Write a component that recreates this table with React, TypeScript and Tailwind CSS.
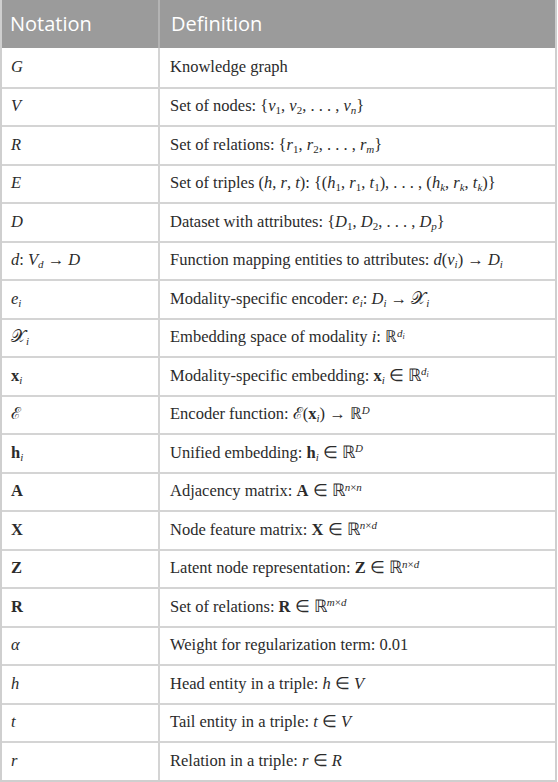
import React from "react";

const I = ({ children }: { children: React.ReactNode }) => <i>{children}</i>;
const B = ({ children }: { children: React.ReactNode }) => <b className="font-bold not-italic">{children}</b>;
// preflight already shifts sub/sup relative to the baseline
const Sub = ({ children }: { children: React.ReactNode }) => <sub className="text-[11px]">{children}</sub>;
const Sup = ({ children }: { children: React.ReactNode }) => <sup className="text-[11px]">{children}</sup>;
const Di = () => (
  <Sup>
    <I>d</I>
    <sub className="text-[8px]">
      <I>i</I>
    </sub>
  </Sup>
);

const rows: [React.ReactNode, React.ReactNode][] = [
  [<I>G</I>, <>Knowledge graph</>],
  [
    <I>V</I>,
    <>
      Set of nodes: {"{"}<I>v</I><Sub>1</Sub>, <I>v</I><Sub>2</Sub>, . . . , <I>v</I><Sub><I>n</I></Sub>{"}"}
    </>,
  ],
  [
    <I>R</I>,
    <>
      Set of relations: {"{"}<I>r</I><Sub>1</Sub>, <I>r</I><Sub>2</Sub>, . . . , <I>r</I><Sub><I>m</I></Sub>{"}"}
    </>,
  ],
  [
    <I>E</I>,
    <>
      Set of triples (<I>h</I>, <I>r</I>, <I>t</I>): {"{"}(<I>h</I><Sub>1</Sub>, <I>r</I><Sub>1</Sub>, <I>t</I><Sub>1</Sub>), . . . , (<I>h</I><Sub><I>k</I></Sub>, <I>r</I><Sub><I>k</I></Sub>, <I>t</I><Sub><I>k</I></Sub>){"}"}
    </>,
  ],
  [
    <I>D</I>,
    <>
      Dataset with attributes: {"{"}<I>D</I><Sub>1</Sub>, <I>D</I><Sub>2</Sub>, . . . , <I>D</I><Sub><I>p</I></Sub>{"}"}
    </>,
  ],
  [
    <>
      <I>d</I>: <I>V</I><Sub><I>d</I></Sub> → <I>D</I>
    </>,
    <>
      Function mapping entities to attributes: <I>d</I>(<I>v</I><Sub><I>i</I></Sub>) → <I>D</I><Sub><I>i</I></Sub>
    </>,
  ],
  [
    <>
      <I>e</I><Sub><I>i</I></Sub>
    </>,
    <>
      Modality-specific encoder: <I>e</I><Sub><I>i</I></Sub>: <I>D</I><Sub><I>i</I></Sub> → 𝒳<Sub><I>i</I></Sub>
    </>,
  ],
  [
    <>
      𝒳<Sub><I>i</I></Sub>
    </>,
    <>
      Embedding space of modality <I>i</I>: ℝ<Di />
    </>,
  ],
  [
    <>
      <B>x</B><Sub><I>i</I></Sub>
    </>,
    <>
      Modality-specific embedding: <B>x</B><Sub><I>i</I></Sub> ∈ ℝ<Di />
    </>,
  ],
  [
    <>ℰ</>,
    <>
      Encoder function: ℰ(<B>x</B><Sub><I>i</I></Sub>) → ℝ<Sup><I>D</I></Sup>
    </>,
  ],
  [
    <>
      <B>h</B><Sub><I>i</I></Sub>
    </>,
    <>
      Unified embedding: <B>h</B><Sub><I>i</I></Sub> ∈ ℝ<Sup><I>D</I></Sup>
    </>,
  ],
  [
    <B>A</B>,
    <>
      Adjacency matrix: <B>A</B> ∈ ℝ<Sup><I>n</I>×<I>n</I></Sup>
    </>,
  ],
  [
    <B>X</B>,
    <>
      Node feature matrix: <B>X</B> ∈ ℝ<Sup><I>n</I>×<I>d</I></Sup>
    </>,
  ],
  [
    <B>Z</B>,
    <>
      Latent node representation: <B>Z</B> ∈ ℝ<Sup><I>n</I>×<I>d</I></Sup>
    </>,
  ],
  [
    <B>R</B>,
    <>
      Set of relations: <B>R</B> ∈ ℝ<Sup><I>m</I>×<I>d</I></Sup>
    </>,
  ],
  [<I>α</I>, <>Weight for regularization term: 0.01</>],
  [
    <I>h</I>,
    <>
      Head entity in a triple: <I>h</I> ∈ <I>V</I>
    </>,
  ],
  [
    <I>t</I>,
    <>
      Tail entity in a triple: <I>t</I> ∈ <I>V</I>
    </>,
  ],
  [
    <I>r</I>,
    <>
      Relation in a triple: <I>r</I> ∈ <I>R</I>
    </>,
  ],
];

export default function App() {
  return (
    <div className="w-[558px] h-[782px] bg-white overflow-hidden">
      <div className="w-[557px] border-l-2 border-r-2 border-b-2 border-[#cfcfcf]">
        {/* header */}
        <div className="flex h-[48px] bg-[#9b9b9b] text-white text-[20px] font-['Open_Sans',sans-serif]">
          <div className="w-[158px] border-r-2 border-[#b3b3b3] flex items-center pl-[8px]">Notation</div>
          <div className="flex-1 flex items-center pl-[11px]">Definition</div>
        </div>
        {rows.map(([n, d], idx) => (
          <div
            key={idx}
            className={
              "flex h-[38.5px] text-[#2b2b2b] text-[16.5px] font-['Liberation_Serif',serif] " +
              (idx > 0 ? "border-t-2 border-[#d4d4d4]" : "")
            }
          >
            <div className="w-[158px] border-r-2 border-[#d4d4d4] flex items-center pl-[9px] whitespace-nowrap">
              <span>{n}</span>
            </div>
            <div className="flex-1 flex items-center pl-[10px] whitespace-nowrap">
              <span>{d}</span>
            </div>
          </div>
        ))}
      </div>
    </div>
  );
}
